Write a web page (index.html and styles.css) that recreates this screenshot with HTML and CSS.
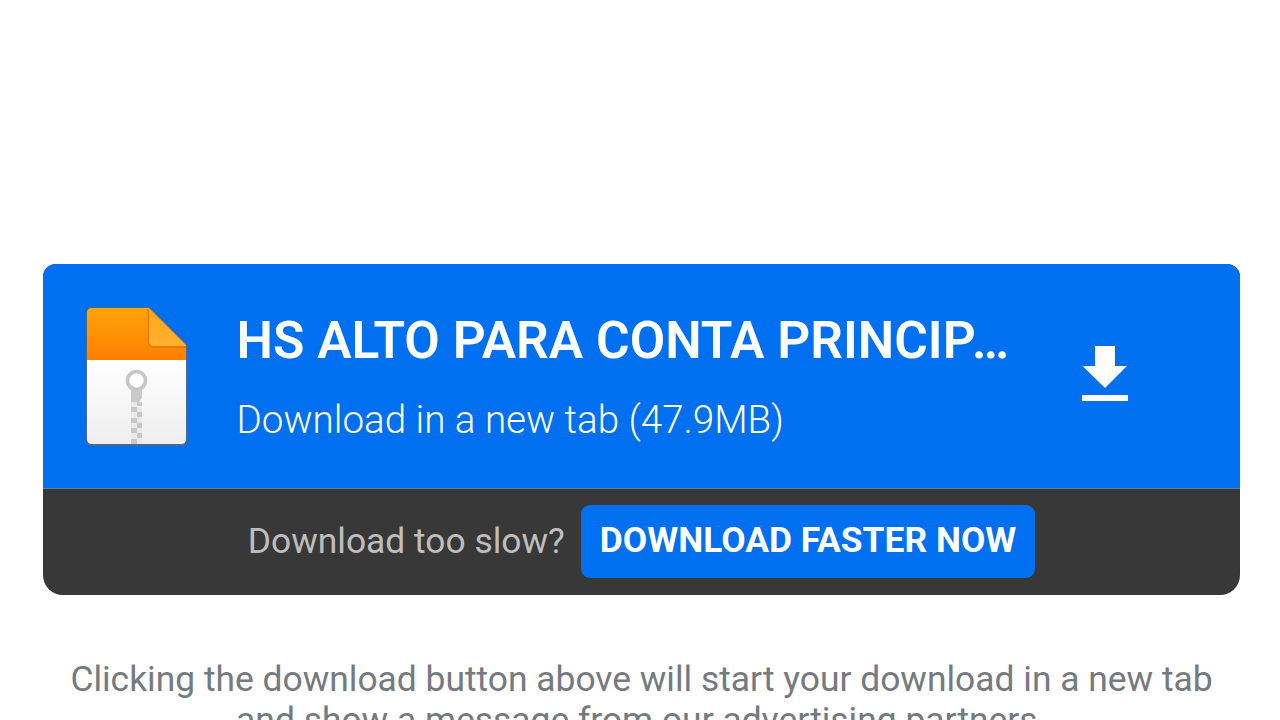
FILE: index.html
```
<!DOCTYPE html>
<html lang="en">
<head>
    <meta charset="UTF-8">
    <meta name="viewport" content="width=device-width, initial-scale=1.0">
    <title>Download</title>
    <link rel="stylesheet" href="styles.css">
</head>
<body>
    <div class="card">
        <a class="download" href="#">
            <svg class="file-icon" viewBox="0 0 104 142">
                <defs>
                    <linearGradient id="top" x1="0" y1="0" x2="0" y2="1">
                        <stop offset="0" stop-color="#ffa50a"/>
                        <stop offset="1" stop-color="#ff7e00"/>
                    </linearGradient>
                    <linearGradient id="paper" x1="0" y1="0" x2="0" y2="1">
                        <stop offset="0" stop-color="#ffffff"/>
                        <stop offset="1" stop-color="#eeeeee"/>
                    </linearGradient>
                    <linearGradient id="fold" x1="0" y1="0" x2="0" y2="1">
                        <stop offset="0" stop-color="#ffa61c"/>
                        <stop offset="1" stop-color="#ffb12e"/>
                    </linearGradient>
                </defs>
                <path d="M7 2H64L101.500 39V134Q101.500 139 96.500 139H7Q2 139 2 134V7Q2 2 7 2Z" fill="none" stroke="#4a6a90" stroke-width="2"/>
                <path d="M2 54H101V133Q101 138 96 138H7Q2 138 2 133Z" fill="url(#paper)"/>
                <path d="M7 2H64L101 39V54H2V7Q2 2 7 2Z" fill="url(#top)"/>
                <path d="M63.500 4V36Q63.500 41 68.500 41H101" fill="none" stroke="#e87c00" stroke-width="2"/>
                <path d="M64 2L101 39V40H69Q64 40 64 35Z" fill="url(#fold)"/>
                <path d="M64 2L101 39" stroke="#c98535" stroke-width="1"/>
                <!-- zipper -->
                <circle cx="51.500" cy="74.500" r="9" fill="#fff" stroke="#c6c6c6" stroke-width="3.600"/>
                <path d="M46 84H57V92L54 96H46Z" fill="#cacaca"/>
                <path d="M52 96H57V100H52ZM46 101H52V106H46ZM52 106H57V111H52ZM46 112H52V117H46ZM52 117H57V122H52ZM46 122H52V127H46ZM52 127H57V132H52ZM46 133H52V138H46Z" fill="#c8c8c8"/>
                <path d="M46 96H52V101H46ZM52 101H57V106H52ZM46 106H52V112H46ZM52 111H57V117H52ZM46 117H52V122H46ZM52 122H57V127H52ZM46 127H52V133H46ZM52 132H57V138H52Z" fill="#e9e9e9"/>
            </svg>
            <div class="info">
                <div class="filename">HS ALTO PARA CONTA PRINCIPAL.zip</div>
                <div class="details">Download in a new tab (47.9MB)</div>
            </div>
            <svg class="arrow" viewBox="0 0 46 56">
                <path d="M13 0H33V20H45L23 42L0.500 20H13Z" fill="#fff"/>
                <path d="M0 49H46V55H0Z" fill="#fff"/>
            </svg>
        </a>
        <div class="faster">
            <span class="slow">Download too slow?</span>
            <a class="faster-btn" href="#">DOWNLOAD FASTER NOW</a>
        </div>
    </div>
    <p class="note">Clicking the download button above will start your download in a new tab<br>and show a message from our advertising partners.</p>
</body>
</html>
```
FILE: styles.css
```
body {
    background-color: #fff;
    font-family: Roboto, sans-serif;
    margin: 0;
    padding: 263.5px 40px 0 43px;
    height: 720px;
    box-sizing: border-box;
    overflow: hidden;
}

a {
    color: #fff;
    text-decoration: none;
}

.card {
    border-radius: 13px 13px 20px 20px;
    overflow: hidden;
    background: #383838;
}

.download {
    display: flex;
    align-items: flex-start;
    box-sizing: border-box;
    height: 224.5px;
    padding: 42px 112px 0 42px;
    background: #0070f0;
}

.file-icon {
    width: 104px;
    height: 142px;
    flex: none;
}

.info {
    width: 784px;
    margin: 5px 0 0 47.5px;
}

.filename {
    font-size: 51.5px;
    line-height: 60px;
    font-weight: 600;
    white-space: nowrap;
    overflow: hidden;
    text-overflow: ellipsis;
}

.details {
    margin-top: 24px;
    font-size: 38.6px;
    line-height: 50px;
    font-weight: 300;
}

.arrow {
    width: 46px;
    height: 56px;
    flex: none;
    margin: 40px 0 0 auto;
}

.faster {
    display: flex;
    justify-content: center;
    align-items: center;
    gap: 16px;
    box-sizing: border-box;
    height: 106.5px;
    border-top: 1px solid #6c7c98;
}

.slow {
    color: #bebebe;
    font-size: 35.4px;
    padding-bottom: 2px;
}

.faster-btn {
    background: #0070f0;
    border-radius: 9px;
    padding: 0 19px 2px;
    font-size: 35.4px;
    font-weight: 700;
    line-height: 71px;
}

.note {
    margin: 64px 0 0;
    color: #757980;
    font-size: 35.4px;
    line-height: 41px;
    text-align: center;
    white-space: nowrap;
}
```
